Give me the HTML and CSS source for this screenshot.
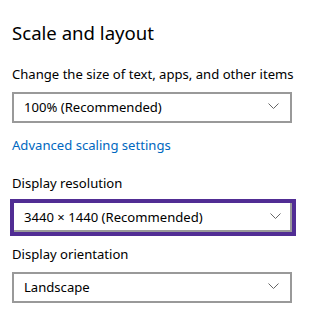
FILE: index.html
```html
<!DOCTYPE html>
<html lang="en">
<head>
  <meta charset="UTF-8">
  <title>Scale and layout</title>
  <link rel="stylesheet" href="styles.css">
</head>
<body>
  <div class="panel">
    <h1>Scale and layout</h1>

    <div class="field">
      <div class="label">Change the size of text, apps, and other items</div>
      <div class="select">
        <span>100% (Recommended)</span>
        <svg class="chevron" width="11" height="6" viewBox="0 0 11 6"><path d="M0.5 0.5 L5.5 5.5 L10.5 0.5" fill="none" stroke="#666" stroke-width="1"/></svg>
      </div>
    </div>

    <a class="link" href="#">Advanced scaling settings</a>

    <div class="field">
      <div class="label">Display resolution</div>
      <div class="select focused">
        <span>3440 × 1440 (Recommended)</span>
        <svg class="chevron" width="11" height="6" viewBox="0 0 11 6"><path d="M0.5 0.5 L5.5 5.5 L10.5 0.5" fill="none" stroke="#666" stroke-width="1"/></svg>
      </div>
    </div>

    <div class="field">
      <div class="label">Display orientation</div>
      <div class="select">
        <span>Landscape</span>
        <svg class="chevron" width="11" height="6" viewBox="0 0 11 6"><path d="M0.5 0.5 L5.5 5.5 L10.5 0.5" fill="none" stroke="#666" stroke-width="1"/></svg>
      </div>
    </div>
  </div>
</body>
</html>
```

FILE: styles.css
```css
body {
  margin: 0;
  padding: 0;
  background: #fff;
  font-family: "Noto Sans", "Open Sans", sans-serif;
  color: #000;
}
.panel {
  padding: 20px 12px 0 12px;
  width: 280px;
}
h1 {
  margin: 0 0 18px 0;
  font-size: 18.6px;
  font-weight: normal;
  line-height: 26px;
}
.field {
  margin-bottom: 12px;
}
.label {
  font-size: 13.1px;
  line-height: 20px;
  margin-bottom: 8px;
  white-space: nowrap;
}
.select {
  box-sizing: border-box;
  height: 31px;
  border: 2px solid #999;
  display: flex;
  align-items: center;
  justify-content: space-between;
  padding: 0 11px 1px 10px;
  font-size: 13.1px;
}
.select.focused {
  height: 37px;
  margin: -2px -4px -4px -2px;
  border: 4px solid #512d94;
  box-shadow: inset -2px -2px 0 #999;
  padding: 0 11px 1px 10px;
}
.chevron {
  display: block;
  margin-top: -3px;
}
.link {
  display: block;
  color: #0067c0;
  text-decoration: none;
  font-size: 13.1px;
  line-height: 20px;
  margin: 0 0 18px 0;
}
```
